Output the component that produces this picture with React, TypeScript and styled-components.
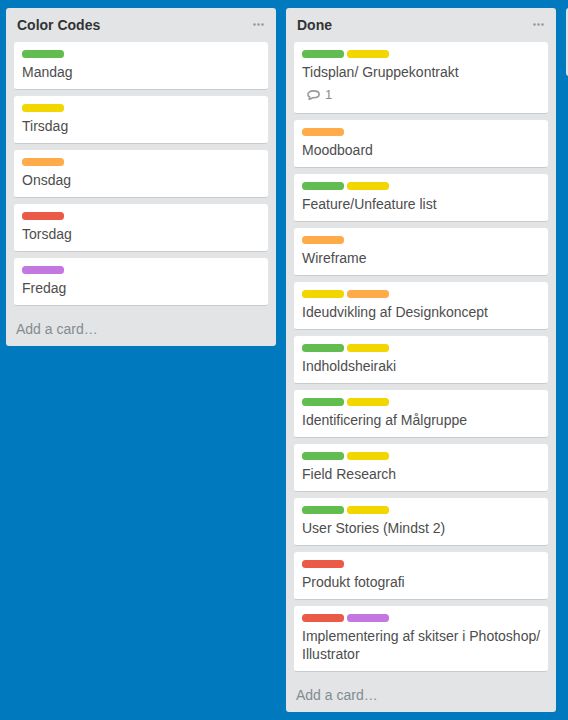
import React from 'react';
import styled, { createGlobalStyle } from 'styled-components';

const Global = createGlobalStyle`
  * { box-sizing: border-box; }
  body { margin: 0; background: #0079bf; overflow: hidden; font-family: "Liberation Sans", Arial, sans-serif; font-size: 14px; line-height: 18px; color: #4d4d4d; }
`;
const Board = styled.main`
  display: flex; align-items: flex-start; gap: 10px; width: 568px; height: 720px; padding: 8px 0 0 6px; overflow: hidden;
`;
const List = styled.section`
  flex: 0 0 270px; background: #e2e4e6; border-radius: 3px;
`;
const Header = styled.header`
  display: flex; justify-content: space-between; height: 34px; padding: 8px 12px 0 11px;
`;
const Title = styled.h2`
  margin: 0; font-size: 14px; line-height: 18px; font-weight: 700; color: #333;
`;
const Menu = styled.svg`
  width: 11px; height: 18px; fill: #999;
`;
const Cards = styled.div`
  display: flex; flex-direction: column; gap: 6px; padding: 0 8px;
`;
const CardBox = styled.article`
  background: #fff; border-bottom: 1px solid #c8cbce; border-radius: 3px; padding: 8px;
`;
const Labels = styled.div`
  display: flex; gap: 3px; margin-bottom: 5px;
`;
const Label = styled.span<{ $color: string }>`
  width: 42px; height: 8px; border-radius: 3.5px; background: ${p => p.$color};
`;
const Name = styled.div`
  white-space: pre;
`;
const Badge = styled.div`
  display: flex; align-items: center; gap: 5px; height: 18px; margin: 5px 0 1px 5px; font-size: 13px; color: #8c8c8c;
`;
const Add = styled.div`
  height: 40px; padding: 14px 10px 0; color: #838c91;
`;
const NextList = styled(List)`
  height: 68px;
`;

const g = '#61bd4f', y = '#f2d600', o = '#ffab4a', r = '#eb5a46', p = '#c377e0';
type CardData = { name: string; labels: string[]; comments?: number };
const lists: { title: string; cards: CardData[] }[] = [
  { title: 'Color Codes', cards: [
    { name: 'Mandag', labels: [g] }, { name: 'Tirsdag', labels: [y] }, { name: 'Onsdag', labels: [o] },
    { name: 'Torsdag', labels: [r] }, { name: 'Fredag', labels: [p] },
  ] },
  { title: 'Done', cards: [
    { name: 'Tidsplan/ Gruppekontrakt', labels: [g, y], comments: 1 },
    { name: 'Moodboard', labels: [o] },
    { name: 'Feature/Unfeature list', labels: [g, y] },
    { name: 'Wireframe', labels: [o] },
    { name: 'Ideudvikling af Designkoncept', labels: [y, o] },
    { name: 'Indholdsheiraki', labels: [g, y] },
    { name: 'Identificering af Målgruppe', labels: [g, y] },
    { name: 'Field Research', labels: [g, y] },
    { name: 'User Stories (Mindst 2)', labels: [g, y] },
    { name: 'Produkt fotografi', labels: [r] },
    { name: 'Implementering af skitser i Photoshop/\nIllustrator', labels: [r, p] },
  ] },
];

const Card = ({ card }: { card: CardData }) => (
  <CardBox>
    <Labels>{card.labels.map(c => <Label key={c} $color={c} />)}</Labels>
    <Name>{card.name}</Name>
    {card.comments && (
      <Badge>
        <svg width="13" height="12" viewBox="0 0 13 12" fill="none" stroke="#999" strokeWidth="1.6" strokeLinejoin="round">
          <path d="M2.7 8C1.500 7.400.9 6.500.9 5.400.9 3.400 3.200 1.900 6.500 1.900s5.600 1.300 5.600 3.300S9.800 8.700 6.500 8.700H5.700C4.700 9.600 3.500 10.200 2 10.300c.6-.7.9-1.400.7-2.300z" />
        </svg>
        {card.comments}
      </Badge>
    )}
  </CardBox>
);

export default function App() {
  return (
    <>
      <Global />
      <Board>
        {lists.map(l => (
          <List key={l.title}>
            <Header>
              <Title>{l.title}</Title>
              <Menu viewBox="0 0 11 18"><circle cx="1.500" cy="8.500" r="1.300" /><circle cx="5.500" cy="8.500" r="1.300" /><circle cx="9.500" cy="8.500" r="1.300" /></Menu>
            </Header>
            <Cards>{l.cards.map(c => <Card key={c.name} card={c} />)}</Cards>
            <Add>Add a card…</Add>
          </List>
        ))}
        <NextList />
      </Board>
    </>
  );
}
